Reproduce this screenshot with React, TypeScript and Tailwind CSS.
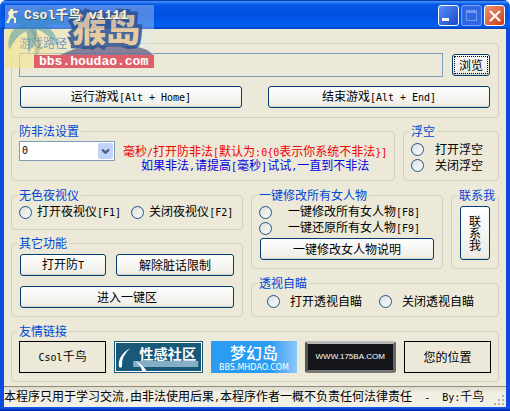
import { Fragment, type ReactNode } from "react";
import { ChevronDown } from "lucide-react";

// Latin runs are set in a half-width mono face beside the full-width Chinese
function Mixed({ text }: { text: string }) {
  return (
    <span className="whitespace-pre">
      {text.split(/([\x20-\x7e]+)/).map((part, i) =>
        i % 2 ? (
          <span key={i} className="font-['DejaVu_Sans_Mono',monospace] text-[10px]">
            {part}
          </span>
        ) : (
          <Fragment key={i}>{part}</Fragment>
        ),
      )}
    </span>
  );
}

function Group({ title, className = "", children }: { title: string; className?: string; children: ReactNode }) {
  return (
    <fieldset className={`min-w-0 rounded border border-[#d0d0bf] px-[7px] ${className}`}>
      <legend className="-ml-0.5 px-0.5 leading-3 whitespace-nowrap text-[#0046d5]">{title}</legend>
      {children}
    </fieldset>
  );
}

function Button({ className = "", children }: { className?: string; children: ReactNode }) {
  return (
    <button
      type="button"
      className={`flex items-center justify-center rounded-[3px] border border-[#003c74] bg-linear-to-b from-white to-[#ecebe5] leading-3 shadow-[inset_0_-1px_0_#d6d0c5] ${className}`}
    >
      {children}
    </button>
  );
}

function Radio({ name, label, gap = "gap-[5px]" }: { name: string; label: string; gap?: string }) {
  return (
    <label className={`flex h-4 items-center ${gap}`}>
      <input
        type="radio"
        name={name}
        className="size-[13px] shrink-0 appearance-none rounded-full border border-[#1d5281] bg-linear-to-br from-[#dcdcd7] to-white checked:bg-[#21a121]"
      />
      <Mixed text={label} />
    </label>
  );
}

function Watermark() {
  return (
    <svg
      aria-hidden="true"
      viewBox="0 0 149 63"
      className="pointer-events-none absolute top-[5px] left-[5px] h-[63px] w-[149px] overflow-visible"
    >
      <defs>
        <linearGradient id="sand">
          <stop offset="0" stopColor="#ffe566" stopOpacity="0.5" />
          <stop offset="0.5" stopColor="#ffe566" stopOpacity="0.35" />
          <stop offset="1" stopColor="#ffe566" stopOpacity="0" />
        </linearGradient>
      </defs>
      <rect width="149" height="63" fill="#e0e8ee" opacity="0.35" />
      <path d="M0 24H80V50H29V63H0Z" fill="url(#sand)" />
      <path d="M55 50Q73 41 89 41H128Q143 43 149 51V50H55Z" fill="#6c6488" opacity="0.8" />
      <path
        d="M4 45Q1 27 15 20Q8 15 0 17Q9 6 24 13Q29 3 46 1Q38 7 36 13Q51 8 62 21Q50 18 40 21Q52 27 53 41Q43 29 32 24Q33 36 23 48Q24 34 21 26Q11 31 4 45Z"
        fill="#2f8ab0"
        opacity="0.45"
      />
      <path d="M28 24Q40 36 33 50H29Q33 36 25 25Z" fill="#6b7d75" opacity="0.3" />
      <text
        x="67"
        y="37"
        fontSize="34"
        fontWeight="900"
        fill="#e6c699"
        stroke="#2c5290"
        strokeWidth="7"
        paintOrder="stroke"
        opacity="0.85"
        fontFamily="Noto Sans CJK SC, sans-serif"
      >
        猴岛
      </text>
      <rect x="29" y="50" width="120" height="13" fill="#db5460" opacity="0.93" />
      <text x="34" y="60" fontSize="13" fontWeight="700" fill="#fff" fontFamily="Liberation Mono, monospace">
        bbs.houdao.com
      </text>
    </svg>
  );
}

function TitleBar() {
  const control = "flex size-[21px] items-center justify-center rounded-[3px] border";
  return (
    <header className="flex h-[29px] items-center gap-0.5 bg-linear-to-b from-[#0a5be8] via-[#0050e0] to-[#0062fa] pt-0.5 pr-[5px] pl-[6px] shadow-[inset_0_1px_0_#0a3fb8,inset_0_3px_2px_#3c8cf8,inset_0_-2px_1px_#0046c8]">
      <svg viewBox="0 0 16 16" className="relative z-10 size-4" fill="#f8f0c8" aria-hidden="true">
        <path d="M4 1h3v2h5v1h-1v1H8l-1 2 1 2 2 1v5H8v-4l-2-1-2 2-1 3H0l2-4 1-3-1-3 1-2h1Z" />
      </svg>
      <h1 className="relative z-10 flex-1 font-['Liberation_Mono','Noto_Sans_CJK_SC',monospace] text-[13px] font-bold whitespace-pre text-[#faf6dc] text-shadow-[1px_1px_0_#3b5a80]">
        Csol千鸟 v1111
      </h1>
      <button type="button" aria-label="最小化" className={`${control} border-white bg-linear-to-br from-[#5b8df5] to-[#1846d0]`}>
        <span className="mt-2 mr-1.5 h-[3px] w-[7px] bg-white" />
      </button>
      <button type="button" aria-label="最大化" disabled className={`${control} border-[#7ea2ee] bg-[#2f67e4]`}>
        <span className="size-[11px] border border-t-[3px] border-[#7297ec]" />
      </button>
      <button type="button" aria-label="关闭" className={`${control} border-white bg-linear-to-br from-[#f0916f] to-[#c93a10]`}>
        <svg viewBox="0 0 12 12" className="size-3" stroke="#fff" strokeWidth="2.2" aria-hidden="true">
          <path d="M1 1l10 10M11 1L1 11" />
        </svg>
      </button>
    </header>
  );
}

function Links() {
  const box = "flex h-8 flex-1 items-center justify-center";
  return (
    <div className="flex gap-2">
      <a href="#csol" className={`${box} border border-black`}>
        <Mixed text="Csol千鸟" />
      </a>
      <a href="#community" className={`${box} border border-[#185878] bg-white p-px`}>
        <svg viewBox="0 0 84 28" preserveAspectRatio="none" className="size-full bg-[#185878]">
          <rect x="17" y="18" width="64" height="6" fill="#86afc7" />
          <path d="M14 5Q1 13 3 24Q6 26 6 22Q5 14 14 5Z" fill="#fff" />
          <path d="M19 18Q26 21 30 28H26Q24 22 19 18Z" fill="#fff" />
          <text x="23" y="16" fontSize="14" fontWeight="700" fill="#fff" fontFamily="Noto Sans CJK SC, sans-serif">
            性感社区
          </text>
        </svg>
      </a>
      <a href="#mhdao" className={`${box} flex-col bg-linear-to-r from-[#2a9cf4] from-70% to-[#8cc8fa] text-white`}>
        <span className="text-[16px] leading-[22px] font-medium">梦幻岛</span>
        <span className="font-['DejaVu_Sans',sans-serif] text-[8px] leading-[10px]">BBS.MHDAO.COM</span>
      </a>
      <a
        href="#175ba"
        className={`${box} rounded-[3px] border-[3px] border-t-[#b8b8b8] border-r-[#666] border-b-[#777] border-l-[#555] bg-[#15161a] font-['Liberation_Sans',sans-serif] text-[8px] text-white`}
      >
        WWW.175BA.COM
      </a>
      <a href="#yours" className={`${box} border border-black`}>
        您的位置
      </a>
    </div>
  );
}

export default function App() {
  return (
    <div className="relative overflow-hidden rounded-t-[7px] bg-[#0a4be0] font-['Noto_Sans_CJK_SC',sans-serif] text-[12px] leading-[14px] text-black">
      <TitleBar />
      <div className="mx-1 bg-[#ece9d8]">
        <main className="px-[7px] pt-2 pb-1">
          <Group title="游戏路径" className="pt-1 pb-[9px]">
            <div className="flex items-center gap-[9px] pr-px">
              <input
                type="text"
                aria-label="游戏路径"
                readOnly
                className="h-6 min-w-0 flex-1 border border-[#7f9db9] bg-transparent px-1 outline-none"
              />
              <Button className="h-[22px] w-[38px] p-px">
                <span className="flex size-full items-center justify-center border border-dotted border-black">浏览</span>
              </Button>
            </div>
            <div className="mt-[9px] flex gap-[26px] px-px">
              <Button className="h-[22px] flex-1">
                <Mixed text="运行游戏[Alt + Home]" />
              </Button>
              <Button className="h-[22px] flex-1">
                <Mixed text="结束游戏[Alt + End]" />
              </Button>
            </div>
          </Group>

          <div className="mt-[7px] flex gap-2">
            <Group title="防非法设置" className="flex-1 pt-1 pb-2">
              <div className="flex">
                <div className="relative h-5 w-24 shrink-0">
                  <select
                    aria-label="防非法设置"
                    className="size-full appearance-none border border-[#7f9db9] bg-white px-0.5 font-['DejaVu_Sans_Mono',monospace] text-[10px]"
                  >
                    <option>0</option>
                  </select>
                  <span className="pointer-events-none absolute inset-y-0.5 right-0.5 flex w-[15px] items-center justify-center rounded-xs bg-[#c2d3fb] text-[#4d6185]">
                    <ChevronDown className="size-[11px]" strokeWidth={5} />
                  </span>
                </div>
                <div className="flex flex-1 flex-col pt-[3px] pl-2">
                  <p className="h-3.5 text-[#f00000]">
                    <Mixed text="毫秒/打开防非法[默认为:0{0表示你系统不非法}]" />
                  </p>
                  <p className="h-3.5 pl-[18px] text-[#0000e0]">
                    <Mixed text="如果非法,请提高[毫秒]试试,一直到不非法" />
                  </p>
                </div>
              </div>
            </Group>
            <Group title="浮空" className="w-24 pt-1 pb-[7px]">
              <Radio name="float" label="打开浮空" gap="gap-[11px]" />
              <Radio name="float" label="关闭浮空" gap="gap-[11px]" />
            </Group>
          </div>

          <div className="mt-2 grid grid-cols-[232fr_248fr] gap-2">
            <div className="flex flex-col gap-[7px]">
              <Group title="无色夜视仪" className="pt-[3px] pb-[9px]">
                <div className="flex gap-2.5">
                  <Radio name="night" label="打开夜视仪[F1]" />
                  <Radio name="night" label="关闭夜视仪[F2]" />
                </div>
              </Group>
              <Group title="其它功能" className="pt-[5px] pb-2">
                <div className="flex gap-2.5 px-px">
                  <Button className="h-[22px] w-[86px]">
                    <Mixed text="打开防T" />
                  </Button>
                  <Button className="h-[22px] flex-1">解除脏话限制</Button>
                </div>
                <div className="mt-2.5 px-px">
                  <Button className="h-[22px] w-full">进入一键区</Button>
                </div>
              </Group>
            </div>

            <div className="flex flex-col gap-2">
              <div className="flex gap-2">
                <Group title="一键修改所有女人物" className="flex-1 pt-[3px] pb-2">
                  <Radio name="female" label="一键修改所有女人物[F8]" gap="gap-4" />
                  <Radio name="female" label="一键还原所有女人物[F9]" gap="gap-4" />
                  <div className="mt-0.5 px-px">
                    <Button className="h-[22px] w-full">一键修改女人物说明</Button>
                  </div>
                </Group>
                <Group title="联系我" className="w-12 pt-[5px] pb-2">
                  <div className="px-px">
                    <Button className="h-[54px] w-full px-2">联系我</Button>
                  </div>
                </Group>
              </div>
              <Group title="透视自瞄" className="flex-1 pt-1">
                <div className="flex gap-[17px] px-2">
                  <Radio name="wall" label="打开透视自瞄" gap="gap-2.5" />
                  <Radio name="wall" label="关闭透视自瞄" gap="gap-2.5" />
                </div>
              </Group>
            </div>
          </div>

          <Group title="友情链接" className="mt-2 pt-1 pb-2">
            <Links />
          </Group>
        </main>
        <footer className="flex h-[21px] items-center justify-between border-t border-[#8f8d80] bg-linear-to-b from-[#dddacb] to-[#f2f0e4] to-30%">
          <Mixed text="本程序只用于学习交流,由非法使用后果,本程序作者一概不负责任何法律责任  -  By:千鸟" />
          <svg viewBox="0 0 12 12" className="size-3 self-end" fill="#b8b4a2" aria-hidden="true">
            <path d="M8 0h2v2H8zM4 4h2v2H4zM8 4h2v2H8zM0 8h2v2H0zM4 8h2v2H4zM8 8h2v2H8z" />
          </svg>
        </footer>
      </div>
      <div className="h-1 bg-linear-to-b from-[#1a5cf0] to-[#001fa8]" />
      <Watermark />
    </div>
  );
}
